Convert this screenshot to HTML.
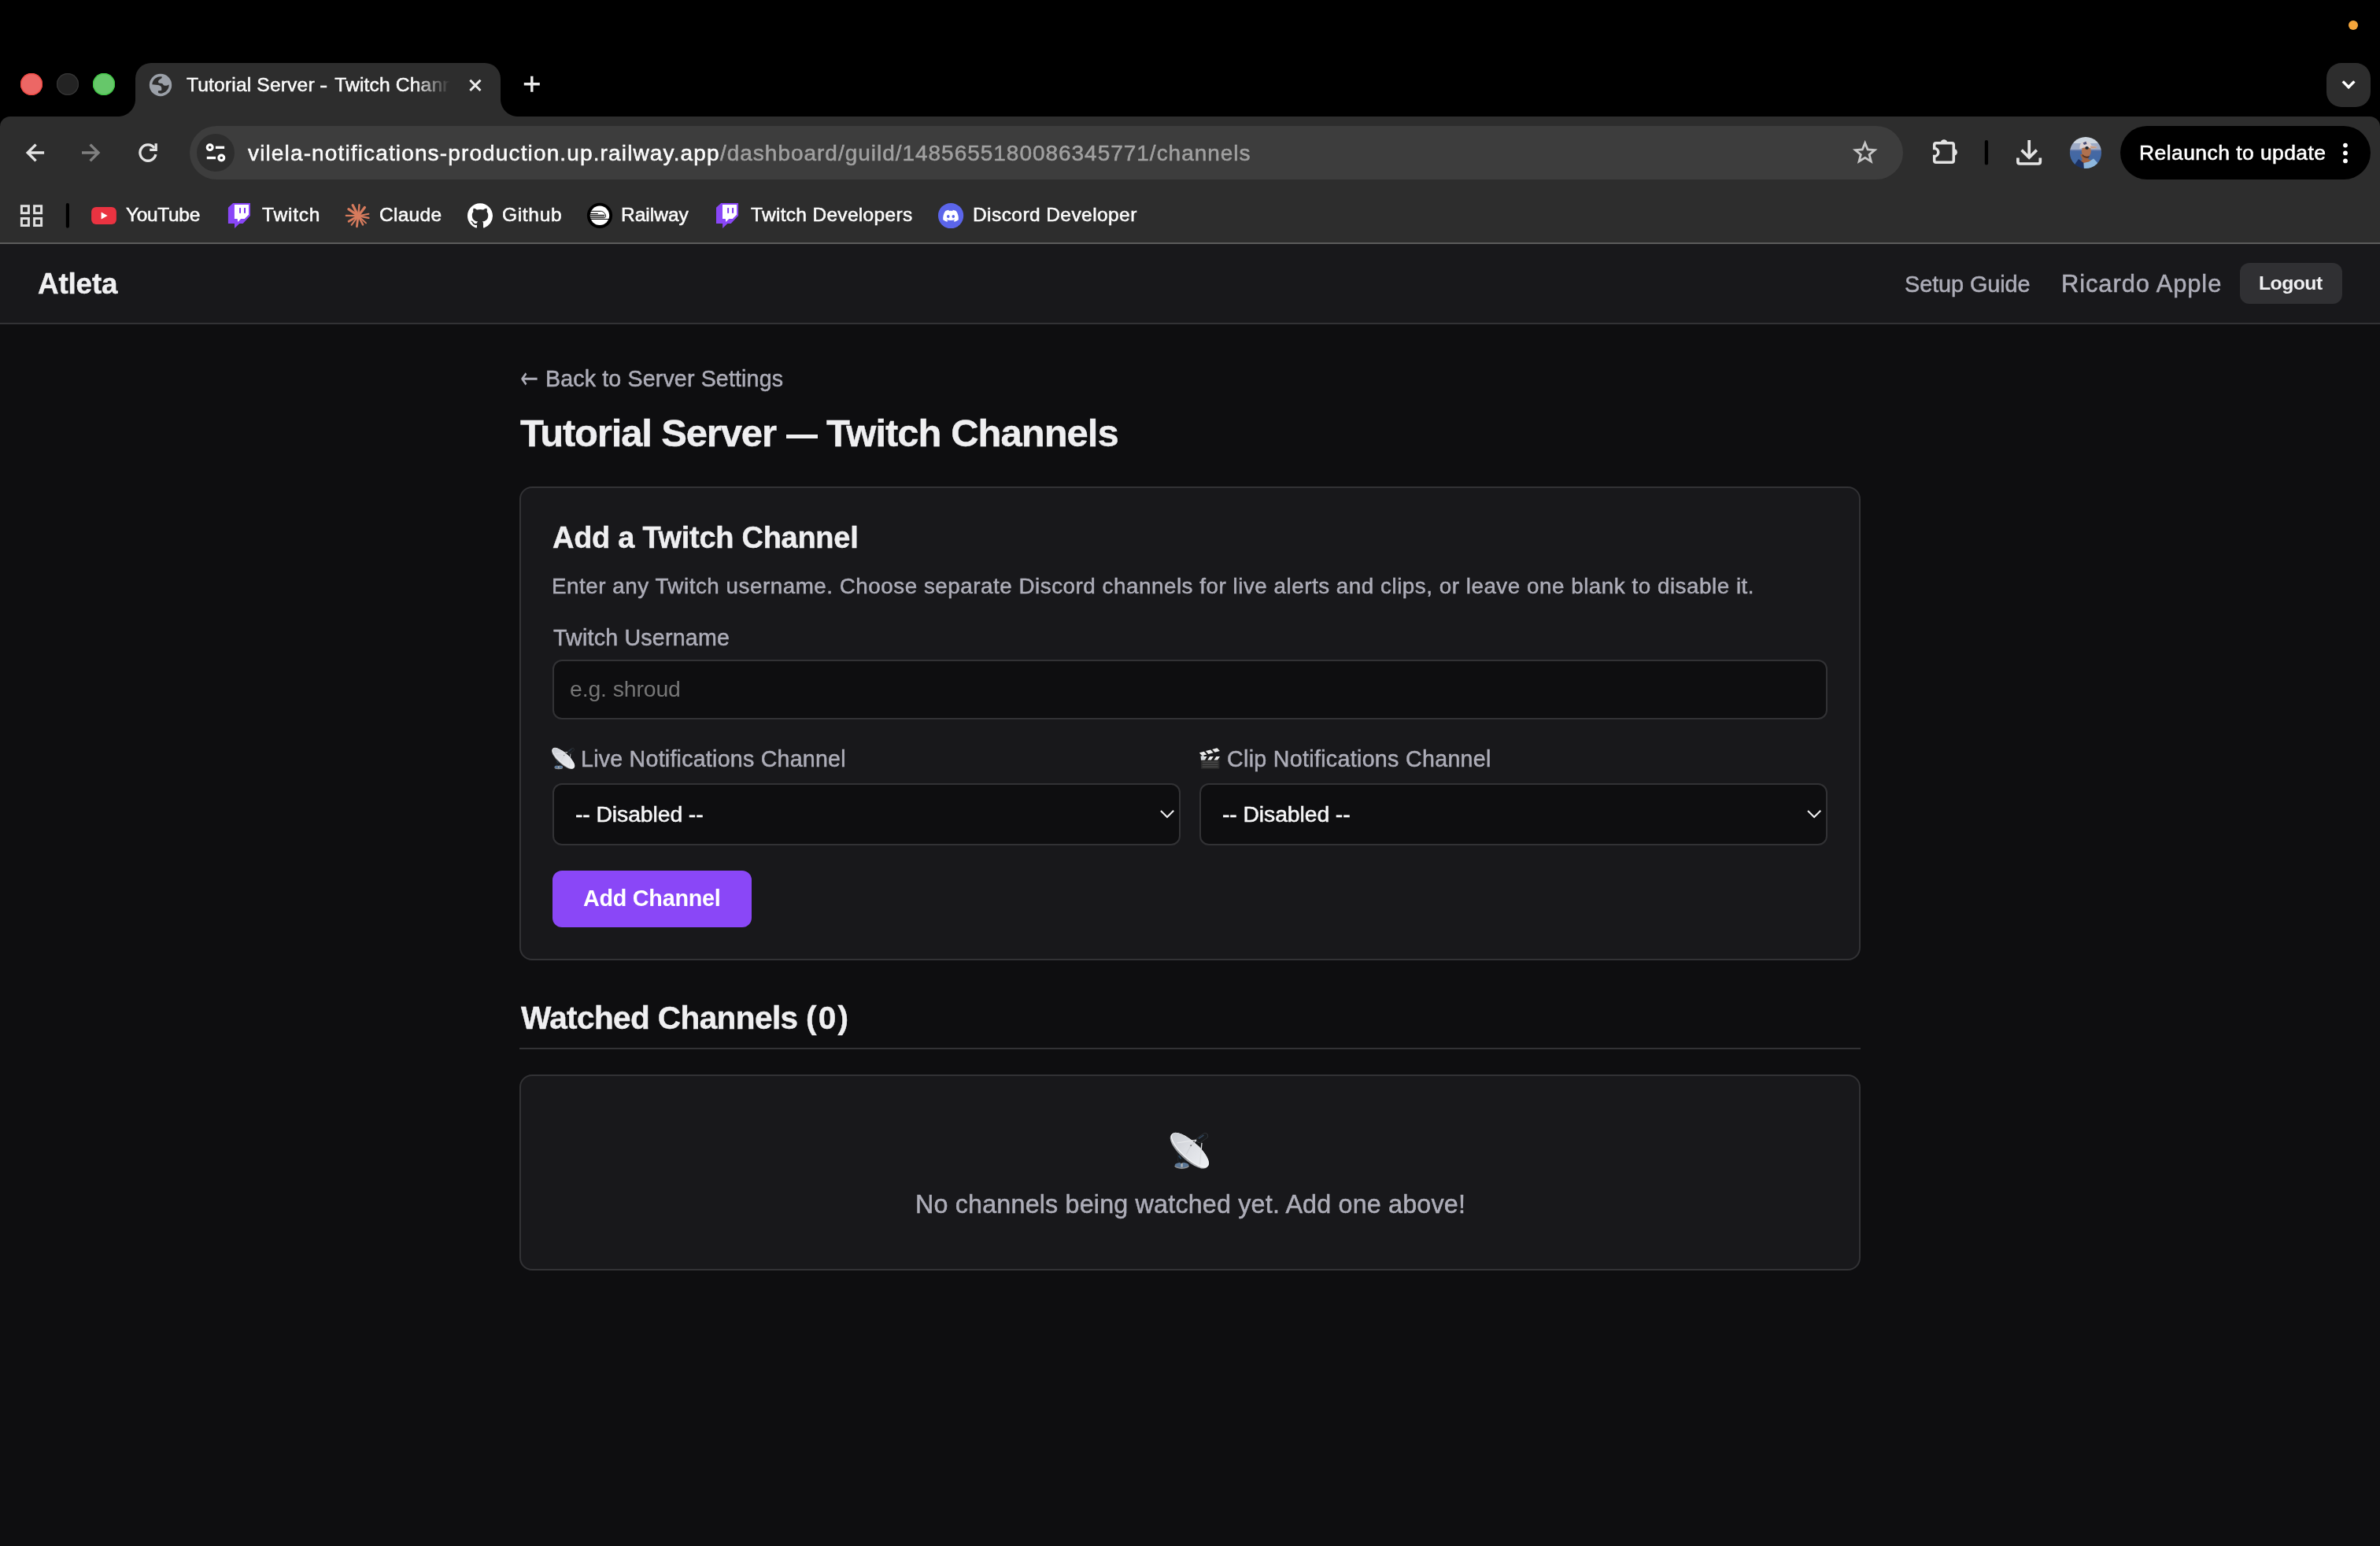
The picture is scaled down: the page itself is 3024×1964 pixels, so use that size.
<!DOCTYPE html>
<html lang="en">
<head>
<meta charset="utf-8">
<title>Tutorial Server - Twitch Channels</title>
<style>
*{box-sizing:border-box;margin:0;padding:0}
html,body{width:3024px;height:1964px;overflow:hidden;background:#0e0e10}
body{position:relative;font-family:"Liberation Sans",Arial,sans-serif;-webkit-font-smoothing:antialiased}
.a{position:absolute}
.g{margin:0;padding:0;font:inherit;display:block}
.t{position:absolute;white-space:nowrap;line-height:1;will-change:transform}
svg{position:absolute;overflow:visible}
/* browser chrome */
#frame{left:0;top:0;width:3024px;height:310px;background:#000}
#toolbar{left:0;top:148px;width:3024px;height:160px;background:#2d2d2d;border-radius:13px 13px 0 0}
#chromeline{left:0;top:308px;width:3024px;height:2px;background:#5b5b5b}
#tab{left:172px;top:80px;width:464px;height:70px;background:#2d2d2d;border-radius:20px 20px 0 0}
#tab:before,#tab:after{content:"";position:absolute;bottom:2px;width:22px;height:22px}
#tab:before{left:-22px;background:radial-gradient(circle at 0 0,rgba(45,45,45,0) 21.5px,#2d2d2d 22.5px)}
#tab:after{right:-22px;background:radial-gradient(circle at 100% 0,rgba(45,45,45,0) 21.5px,#2d2d2d 22.5px)}
.tl{width:28px;height:28px;border-radius:50%;top:93px}
#omni{left:240.5px;top:160px;width:2177.5px;height:68px;border-radius:34px;background:#3d3d3d}
#siteinfo{left:250px;top:170px;width:48px;height:48px;border-radius:50%;background:#2d2d2d}
#pill{left:2694px;top:160px;width:318px;height:68px;border-radius:34px;background:#000}
#tabsearch{left:2956px;top:80px;width:56px;height:56px;border-radius:19px;background:#2d2d2d}
#tabtitle{left:236px;top:90px;width:340px;height:36px;overflow:hidden;-webkit-mask-image:linear-gradient(90deg,#000 0,#000 290px,transparent 336px);mask-image:linear-gradient(90deg,#000 0,#000 290px,transparent 336px)}
#tabtitle span{position:absolute;left:1px;top:5.5px;font-size:24.6px;line-height:1;color:#fbfbfb;white-space:nowrap;letter-spacing:0.16px;-webkit-text-stroke:0.5px}
/* page */
#nav{left:0;top:310px;width:3024px;height:100px;background:#18181b}
#navline{left:0;top:410px;width:3024px;height:2px;background:#323235}
#logoutbtn{left:2846px;top:334px;width:130px;height:52px;border-radius:12px;background:#303033}
.card{left:660px;width:1704px;background:#18181b;border:2px solid #323235;border-radius:16px}
.field{background:#0e0e10;border:2px solid #323235;border-radius:12px}
#addbtnbg{left:702px;top:1106px;width:253px;height:72px;border-radius:12px;background:#8a47f7}
#divider{left:660px;top:1331px;width:1704px;height:2px;background:#323235}
</style>
</head>
<body>
<!-- ===== browser chrome ===== -->
<div class="a" id="frame"></div>
<div class="a" id="toolbar"></div>
<div class="a" id="tab"></div>
<div class="a" id="chromeline"></div>
<div class="a tl" style="left:26px;background:#ec6765;box-shadow:inset 0 0 0 1.2px #f2453f"></div>
<div class="a tl" style="left:72px;background:#232323;box-shadow:inset 0 0 0 1.2px #363636"></div>
<div class="a tl" style="left:118px;background:#66c76a;box-shadow:inset 0 0 0 1.2px #3cc641"></div>
<div class="a" id="tabsearch"></div>
<div class="a" style="left:2983.7px;top:26.3px;width:12px;height:12px;border-radius:50%;background:#f4a53b"></div>
<div class="a" id="tabtitle"><span>Tutorial Server <i style="font-style:normal;margin:0 3px 0 0.5px;display:inline-block;transform:scaleX(1.25)">-</i> Twitch Channels</span></div>
<div class="a" id="omni"></div>
<div class="a" id="siteinfo"></div>
<div class="a" id="pill"></div>
<svg width="3024" height="320" viewBox="0 0 3024 320" style="left:0;top:0">
<!-- globe favicon -->
<g transform="translate(184,88)">
<circle cx="20" cy="20" r="14.2" fill="#9ba0a8"/>
<path d="M9.3 19.3 A10.7 10.7 0 0 1 22 9.5 L21.4 11 C20.8 12 19.6 12.4 18.5 13.3 C17.4 14.2 16.8 15.4 17.2 16.4 C17.6 17.4 18.4 17.7 19.6 17.8 L21.6 18 C22.5 18.1 22.8 18.6 23.3 19.4 C24 20.4 24.9 20.8 26.2 20.8 C27.9 20.8 29.4 20.3 30.7 19.5 A10.7 10.7 0 0 1 17.3 30.3 L16.9 28.6 C16.8 27.7 17.1 27.4 18 27.3 L20.2 27.1 C21.1 27 21.3 26.6 21.3 25.7 L21.3 23.8 C21.2 22.4 20.6 21.5 19.5 20.9 C18.5 20.3 17.4 20.1 16.2 20 Z" fill="#2d2d2d"/>
</g>
<!-- tab close / new tab -->
<path d="M597.3 101.8 L610.5 115 M610.5 101.8 L597.3 115" stroke="#ececec" stroke-width="3" fill="none"/>
<path d="M665.8 106.8 H685.8 M675.8 96.8 V116.8" stroke="#ececec" stroke-width="3.4" fill="none"/>
<!-- tab search chevron -->
<path d="M2976.8 103.4 L2984.1 110.8 L2991.4 103.4" stroke="#fff" stroke-width="3.4" fill="none"/>
<!-- back / forward / reload -->
<path d="M56.1 194 H35 M45.6 183.6 L35.2 194 L45.6 204.4" stroke="#e3e3e3" stroke-width="3.4" fill="none"/>
<path d="M104 194 H125.2 M114.6 183.6 L125 194 L114.6 204.4" stroke="#808080" stroke-width="3.4" fill="none"/>
<path d="M196.1 188 A10.1 10.1 0 1 0 197.9 196.2" stroke="#e3e3e3" stroke-width="3.3" fill="none"/>
<path d="M198.2 182.2 V190.4 H190.2" stroke="#e3e3e3" stroke-width="3.3" fill="none"/>
<!-- site info (tune) -->
<circle cx="266.7" cy="187.3" r="3.4" stroke="#fff" stroke-width="3.2" fill="none"/>
<rect x="273.9" y="185.7" width="11.2" height="3.3" fill="#fff"/>
<rect x="262.8" y="198.9" width="11.3" height="3.3" fill="#fff"/>
<circle cx="281.3" cy="200.5" r="3.4" stroke="#fff" stroke-width="3.2" fill="none"/>
<!-- star -->
<path d="M2369.7 181.7 L2373.1 190.0 L2382.0 190.6 L2375.1 196.4 L2377.3 205.0 L2369.7 200.3 L2362.1 205.0 L2364.3 196.4 L2357.4 190.6 L2366.3 190.0 Z" stroke="#c7c7c7" stroke-width="2.8" fill="none" stroke-linejoin="miter"/>
<!-- extensions puzzle -->
<path d="M2457.7 183.9 Q2457.7 181.7 2459.9 181.7 H2480.1 Q2482.3 181.7 2482.3 183.9 V204.1 Q2482.3 206.3 2480.1 206.3 H2459.9 Q2457.7 206.3 2457.7 204.1 V198.6 A5.1 5.1 0 0 0 2457.7 188.4 Z" stroke="#e3e3e3" stroke-width="3.5" fill="none" stroke-linejoin="miter"/><path d="M2465.6 181.7 A4.4 4.6 0 0 1 2474.4 181.7 Z" fill="#e3e3e3"/><path d="M2482.3 189 A4.6 4.4 0 0 1 2482.3 197.8 Z" fill="#e3e3e3"/>
<!-- separator -->
<rect x="2521.8" y="178" width="4.3" height="31.6" rx="2.1" fill="#000"/>
<!-- download -->
<path d="M2578.2 177.9 V199.5 M2568.6 190.6 L2578.2 200.2 L2587.8 190.6" stroke="#e3e3e3" stroke-width="3.7" fill="none"/>
<path d="M2563.9 200.5 V205.5 Q2563.9 208 2566.4 208 H2589.8 Q2592.3 208 2592.3 205.5 V200.5" stroke="#e3e3e3" stroke-width="3.7" fill="none"/>
<!-- avatar -->
<defs><clipPath id="avc"><circle cx="2650" cy="194" r="20.1"/></clipPath>
<linearGradient id="sea" x1="0" y1="0" x2="0" y2="1"><stop offset="0" stop-color="#4a65a0"/><stop offset="1" stop-color="#3f6aa6"/></linearGradient></defs>
<filter id="avb" x="-10%" y="-10%" width="120%" height="120%"><feGaussianBlur stdDeviation="0.55"/></filter>
<g clip-path="url(#avc)"><g filter="url(#avb)">
<rect x="2629" y="173" width="42" height="42" fill="url(#sea)"/>
<rect x="2629" y="173" width="42" height="9.5" fill="#cdd6e0"/>
<rect x="2629" y="182" width="42" height="8.5" fill="#9facc6"/>
<path d="M2629 190 H2671 V191.5 H2629Z" fill="#6b7fae"/>
<path d="M2643 196 L2646 203 L2640 207 L2652 215 L2662 206 L2653 202 L2654 196 Z" fill="#a2633f"/>
<ellipse cx="2650.8" cy="192" rx="6" ry="7.6" fill="#b0714f"/>
<path d="M2646 196 Q2649 200 2655 198 L2654 200.5 Q2649 202 2645.5 198Z" fill="#5a3524"/>
<path d="M2642.3 189 Q2641.6 180.5 2649.5 179.4 Q2656 179.2 2657.5 185 L2664.5 186.5 Q2664 189 2657 188.2 Q2650 186 2642.3 189Z" fill="#d9d0d2"/>
<path d="M2656 185.6 L2664.6 186.6 Q2663.6 189.4 2656.4 188.2Z" fill="#c89a80"/>
<path d="M2646.5 181.5 L2650.5 179.8 L2651.5 183 L2648 184Z" fill="#4a4f78"/>
<ellipse cx="2651.6" cy="187.9" rx="2.2" ry="1.9" fill="#16202c"/>
<path d="M2634 212 L2641 202 L2647.5 207 L2648 216 Z" fill="#1f3263"/>
<path d="M2647.5 207 L2654 205.5 L2660 201.5 L2668 210 L2660 216 L2648 216Z" fill="#8db7de"/>
</g></g>
<!-- menu dots -->
<circle cx="2980" cy="184.6" r="2.9" fill="#fff"/><circle cx="2980" cy="194.4" r="2.9" fill="#fff"/><circle cx="2980" cy="204.4" r="2.9" fill="#fff"/>
<!-- apps grid -->
<g stroke="#dedede" stroke-width="3" fill="none">
<rect x="27.4" y="261.7" width="9" height="9"/><rect x="43.6" y="261.7" width="9" height="9"/>
<rect x="27.4" y="277.5" width="9" height="9"/><rect x="43.6" y="277.5" width="9" height="9"/>
</g>
<rect x="83.8" y="258" width="4.2" height="31.7" rx="2.1" fill="#000"/>
<!-- youtube -->
<rect x="116.1" y="263" width="31.8" height="21.9" rx="6" fill="#ea3341"/>
<path d="M128.6 269.4 V278.5 L136.6 274 Z" fill="#fff"/>
<!-- twitch -->
<g id="tw">
<path d="M296.1 258.1 H318 V273.9 L308.6 283.9 H304.2 L298 290.1 V283.9 H289.9 V263.7 Z" fill="#8946f7"/>
<path d="M297.9 259.9 H316 V272.8 L310.7 278.1 H306.1 L302.2 282 L301.7 278.1 H297.9 Z" fill="#fff"/>
<rect x="304.1" y="264.1" width="1.9" height="6.7" fill="#7a33f0"/><rect x="310" y="264.1" width="2" height="6.7" fill="#7a33f0"/>
</g>
<g transform="translate(620.1 0)">
<path d="M296.1 258.1 H318 V273.9 L308.6 283.9 H304.2 L298 290.1 V283.9 H289.9 V263.7 Z" fill="#8946f7"/>
<path d="M297.9 259.9 H316 V272.8 L310.7 278.1 H306.1 L302.2 282 L301.7 278.1 H297.9 Z" fill="#fff"/>
<rect x="304.1" y="264.1" width="1.9" height="6.7" fill="#7a33f0"/><rect x="310" y="264.1" width="2" height="6.7" fill="#7a33f0"/>
</g>
<!-- claude -->
<g stroke="#d67b5d" stroke-linecap="round" fill="none" transform="translate(455.2,274.2)">
<path d="M0 0 L-7.1 -13.6" stroke-width="3.27"/><path d="M0 0 L1.3 -14" stroke-width="2.41"/><path d="M0 0 L8.2 -10.6" stroke-width="3.27"/>
<path d="M0 0 L13.2 -2.4" stroke-width="2.06"/><path d="M0 0 L13.2 2.7" stroke-width="2.41"/><path d="M0 0 L9.8 9.2" stroke-width="1.98"/>
<path d="M0 0 L5.9 11.2" stroke-width="2.41"/><path d="M0 0 L-1.8 13.6" stroke-width="2.75"/><path d="M0 0 L-8.6 11.6" stroke-width="1.98"/>
<path d="M0 0 L-12.1 7.1" stroke-width="2.75"/><path d="M0 0 L-15.4 -0.3" stroke-width="2.24"/><path d="M0 0 L-12.3 -8.5" stroke-width="3.27"/>
<circle cx="0" cy="0" r="3.3" fill="#d67b5d" stroke="none"/>
</g>
<!-- github -->
<path transform="translate(593.95,258.2) scale(2.005)" fill="#fff" d="M8 0C3.58 0 0 3.58 0 8c0 3.54 2.29 6.53 5.47 7.59.4.07.55-.17.55-.38 0-.19-.01-.82-.01-1.49-2.01.37-2.53-.49-2.69-.94-.09-.23-.48-.94-.82-1.13-.28-.15-.68-.52-.01-.53.63-.01 1.08.58 1.23.82.72 1.21 1.87.87 2.33.66.07-.52.28-.87.51-1.07-1.78-.2-3.64-.89-3.64-3.95 0-.87.31-1.59.82-2.15-.08-.2-.36-1.02.08-2.12 0 0 .67-.21 2.2.82.64-.18 1.32-.27 2-.27.68 0 1.36.09 2 .27 1.53-1.04 2.2-.82 2.2-.82.44 1.1.16 1.92.08 2.12.51.56.82 1.27.82 2.15 0 3.07-1.87 3.75-3.65 3.95.29.25.54.73.54 1.48 0 1.07-.01 1.93-.01 2.2 0 .21.15.46.55.38A8.013 8.013 0 0016 8c0-4.42-3.58-8-8-8z"/>
<!-- railway -->
<circle cx="762" cy="273.8" r="16.1" fill="#000"/>
<circle cx="762" cy="273.8" r="12.2" fill="#fff"/>
<g stroke="#000" stroke-width="1" fill="none">
<path d="M750.7 268.3 H763.4 C766.5 268.3 769.6 271.7 769.6 274.5 C769.6 276.1 768.4 276.7 767.7 276.7 H750"/>
<path d="M750 271.4 H759.4" stroke-linecap="round"/>
<path d="M750 278.4 H774.2"/>
</g>
<rect x="749.8" y="272.6" width="18.6" height="2.8" fill="#555"/>
<!-- discord -->
<circle cx="1208.1" cy="274" r="16.1" fill="#5b65ea"/>
<path transform="translate(1198.2,264.5) scale(0.82)" fill="#fff" d="M20.317 4.3698a19.7913 19.7913 0 00-4.8851-1.5152.0741.0741 0 00-.0785.0371c-.211.3753-.4447.8648-.6083 1.2495-1.8447-.2762-3.68-.2762-5.4868 0-.1636-.3933-.4058-.8742-.6177-1.2495a.077.077 0 00-.0785-.037 19.7363 19.7363 0 00-4.8852 1.515.0699.0699 0 00-.0321.0277C.5334 9.0458-.319 13.5799.0992 18.0578a.0824.0824 0 00.0312.0561c2.0528 1.5076 4.0413 2.4228 5.9929 3.0294a.0777.0777 0 00.0842-.0276c.4616-.6304.8731-1.2952 1.226-1.9942a.076.076 0 00-.0416-.1057c-.6528-.2476-1.2743-.5495-1.8722-.8923a.077.077 0 01-.0076-.1277c.1258-.0943.2517-.1923.3718-.2914a.0743.0743 0 01.0776-.0105c3.9278 1.7933 8.18 1.7933 12.0614 0a.0739.0739 0 01.0785.0095c.1202.099.246.1981.3728.2924a.077.077 0 01-.0066.1276 12.2986 12.2986 0 01-1.873.8914.0766.0766 0 00-.0407.1067c.3604.698.7719 1.3628 1.225 1.9932a.076.076 0 00.0842.0286c1.961-.6067 3.9495-1.5219 6.0023-3.0294a.077.077 0 00.0313-.0552c.5004-5.177-.8382-9.6739-3.5485-13.6604a.061.061 0 00-.0312-.0286zM8.02 15.3312c-1.1825 0-2.1569-1.0857-2.1569-2.419 0-1.3332.9555-2.4189 2.157-2.4189 1.2108 0 2.1757 1.0952 2.1568 2.419 0 1.3332-.9555 2.4189-2.1569 2.4189zm7.9748 0c-1.1825 0-2.1569-1.0857-2.1569-2.419 0-1.3332.9554-2.4189 2.1569-2.4189 1.2108 0 2.1757 1.0952 2.1568 2.419 0 1.3332-.946 2.4189-2.1568 2.4189Z"/>
</svg>

<!-- ===== page ===== -->
<div class="a" id="nav"></div>
<div class="a" id="navline"></div>
<div class="a" id="logoutbtn"></div>
<div class="a card" style="top:618px;height:602px"></div>
<div class="a field" style="left:702px;top:838px;width:1620px;height:76px"></div>
<div class="a field" style="left:702px;top:995px;width:798px;height:79px"></div>
<div class="a field" style="left:1524px;top:995px;width:798px;height:79px"></div>
<div class="a" id="addbtnbg"></div>
<div class="a" id="divider"></div>
<div class="a card" style="top:1365px;height:249px"></div>
<svg width="3024" height="1964" viewBox="0 0 3024 1964" style="left:0;top:0;pointer-events:none">
<defs>
<linearGradient id="dishg" x1="0" y1="0" x2="1" y2="0"><stop offset="0" stop-color="#c9ccd2"/><stop offset="0.45" stop-color="#dcdee3"/><stop offset="1" stop-color="#eceef2"/></linearGradient>
<linearGradient id="rimg" x1="0" y1="0" x2="1" y2="0"><stop offset="0" stop-color="#b9bbbf"/><stop offset="0.5" stop-color="#8c8e92"/><stop offset="1" stop-color="#c2c4c8"/></linearGradient>
</defs>
<!-- select chevrons -->
<path d="M1474.9 1029.9 L1483 1038 L1491.2 1029.8" stroke="#efeff1" stroke-width="2.1" fill="none"/>
<path d="M2297 1029.9 L2305.1 1038 L2313.3 1029.8" stroke="#efeff1" stroke-width="2.1" fill="none"/>
<!-- emoji: satellite (label), clapper (label), satellite (empty state) -->
<svg x="701.8" y="948.6" width="28.4" height="29" viewBox="0 0 48 49" overflow="visible" style="position:static">
 <ellipse cx="13.6" cy="44.6" rx="9.1" ry="3.7" fill="#8d8e90"/>
 <ellipse cx="13.6" cy="43.4" rx="8.8" ry="3.3" fill="#5a7696"/>
 <rect x="12.5" y="36" width="2.2" height="10" fill="#b6b8ba"/>
 <path d="M7.4 27.5 L10.4 26.6 L17.6 35.6 L16.8 39.6 L12.6 41.4 L8.6 38 L9 33 Z" fill="#16191d" stroke="#33373c" stroke-width="0.5"/>
 <path d="M9.6 31.4 L12.6 35.6" stroke="#2f4a66" stroke-width="1.4"/>
 <g transform="translate(24 24.4) rotate(42)">
  <ellipse cx="0" cy="1.6" rx="30.8" ry="11.6" fill="url(#rimg)"/>
  <ellipse cx="0" cy="0" rx="30.8" ry="11.2" fill="#f4f5f7"/>
  <ellipse cx="0" cy="-0.6" rx="30" ry="10.4" fill="url(#dishg)"/>
 </g>
 <path d="M27.6 13 L32.8 11 L36.6 12.2 L38.8 15.5 L37.2 20 L32.6 17.2 Z" fill="#121416"/>
 <path d="M32.6 11.6 L7.6 15.2" stroke="#e6e7ea" stroke-width="1.3"/>
 <path d="M32.6 11.6 L25.2 18.6 L19.4 29.6" stroke="#d0d2d6" stroke-width="1.2" fill="none"/>
 <path d="M39 15.3 L36.5 42.6" stroke="#d9dbde" stroke-width="1.3"/>
 <circle cx="25.2" cy="18.6" r="1" fill="#6d6f73"/>
 <path d="M36 11.4 L43.2 6.4" stroke="#3d4146" stroke-width="7.6" stroke-linecap="round"/>
 <path d="M36 11.4 L43.2 6.4" stroke="#191b1e" stroke-width="6.4" stroke-linecap="round"/>
 <path d="M35.4 9.6 L41 5.8" stroke="#32475f" stroke-width="1.5" stroke-linecap="round"/>
</svg>
<svg x="1524" y="949.2" width="28" height="28" viewBox="0 0 28 28" overflow="visible" style="position:static">
 <rect x="2" y="16.4" width="23.4" height="11.2" rx="0.8" fill="#2b2b2b"/>
 <path d="M3.6 19 H23.6 M3.6 22 H23.6 M3.6 25 H23.6" stroke="#4f4f4f" stroke-width="1.2"/>
 <path d="M1.4 11.6 H27 L27.4 16.6 H1.6 Z" fill="#1c1c1c"/>
 <path d="M2 16.4 L5 11.8 H9.6 L6.6 16.4 Z M10.2 16.4 L13.2 11.8 H17.8 L14.8 16.4 Z M18.4 16.4 L21.4 11.8 H26 L23 16.4 Z" fill="#ececec"/>
 <g transform="rotate(-15 1.5 11.5)">
  <path d="M1 6.6 H27 V11.6 H1 Z" fill="#1c1c1c"/>
  <path d="M1.2 11.4 L3.6 6.8 H10 L7.6 11.4 Z M9.8 11.4 L12.2 6.8 H18.6 L16.2 11.4 Z M18.4 11.4 L20.8 6.8 H27 L24.6 11.4 Z" fill="#ececec" transform="matrix(-1 0 0 1 28 0)"/>
 </g>
 <path d="M1.6 11.6 L5.4 10.4 L7.6 16 L2 16.4 Z" fill="#d4d8dc"/>
</svg>
<svg x="1488" y="1436.6" width="48" height="49" viewBox="0 0 48 49" overflow="visible" style="position:static">
 <ellipse cx="13.6" cy="44.6" rx="9.1" ry="3.7" fill="#8d8e90"/>
 <ellipse cx="13.6" cy="43.4" rx="8.8" ry="3.3" fill="#5a7696"/>
 <rect x="12.5" y="36" width="2.2" height="10" fill="#b6b8ba"/>
 <path d="M7.4 27.5 L10.4 26.6 L17.6 35.6 L16.8 39.6 L12.6 41.4 L8.6 38 L9 33 Z" fill="#16191d" stroke="#33373c" stroke-width="0.5"/>
 <path d="M9.6 31.4 L12.6 35.6" stroke="#2f4a66" stroke-width="1.4"/>
 <g transform="translate(24 24.4) rotate(42)">
  <ellipse cx="0" cy="1.6" rx="30.8" ry="11.6" fill="url(#rimg)"/>
  <ellipse cx="0" cy="0" rx="30.8" ry="11.2" fill="#f4f5f7"/>
  <ellipse cx="0" cy="-0.6" rx="30" ry="10.4" fill="url(#dishg)"/>
 </g>
 <path d="M27.6 13 L32.8 11 L36.6 12.2 L38.8 15.5 L37.2 20 L32.6 17.2 Z" fill="#121416"/>
 <path d="M32.6 11.6 L7.6 15.2" stroke="#e6e7ea" stroke-width="1.3"/>
 <path d="M32.6 11.6 L25.2 18.6 L19.4 29.6" stroke="#d0d2d6" stroke-width="1.2" fill="none"/>
 <path d="M39 15.3 L36.5 42.6" stroke="#d9dbde" stroke-width="1.3"/>
 <circle cx="25.2" cy="18.6" r="1" fill="#6d6f73"/>
 <path d="M36 11.4 L43.2 6.4" stroke="#3d4146" stroke-width="7.6" stroke-linecap="round"/>
 <path d="M36 11.4 L43.2 6.4" stroke="#191b1e" stroke-width="6.4" stroke-linecap="round"/>
 <path d="M35.4 9.6 L41 5.8" stroke="#32475f" stroke-width="1.5" stroke-linecap="round"/>
</svg>
</svg>

<div class="t" id="url1" style="left:314.50px;top:180.80px;font-size:28px;font-weight:400;color:#fbfbfb;letter-spacing:1.138px;-webkit-text-stroke:0.55px;">vilela-notifications-production.up.railway.app</div>
<div class="t" id="url2" style="left:914.50px;top:180.80px;font-size:28px;font-weight:400;color:#a0a0a0;letter-spacing:0.977px;-webkit-text-stroke:0.55px;">/dashboard/guild/1485655180086345771/channels</div>
<div class="t" id="bm1" style="left:160.00px;top:261.46px;font-size:24.5px;font-weight:400;color:#fbfbfb;letter-spacing:-0.333px;-webkit-text-stroke:0.55px;">YouTube</div>
<div class="t" id="bm2" style="left:333.00px;top:261.46px;font-size:24.5px;font-weight:400;color:#fbfbfb;letter-spacing:0.800px;-webkit-text-stroke:0.55px;">Twitch</div>
<div class="t" id="bm3" style="left:482.00px;top:261.46px;font-size:24.5px;font-weight:400;color:#fbfbfb;letter-spacing:0.280px;-webkit-text-stroke:0.55px;">Claude</div>
<div class="t" id="bm4" style="left:638.00px;top:261.46px;font-size:24.5px;font-weight:400;color:#fbfbfb;letter-spacing:0.680px;-webkit-text-stroke:0.55px;">Github</div>
<div class="t" id="bm5" style="left:789.00px;top:261.46px;font-size:24.5px;font-weight:400;color:#fbfbfb;letter-spacing:0.000px;-webkit-text-stroke:0.55px;">Railway</div>
<div class="t" id="bm6" style="left:954.00px;top:261.46px;font-size:24.5px;font-weight:400;color:#fbfbfb;letter-spacing:0.312px;-webkit-text-stroke:0.55px;">Twitch Developers</div>
<div class="t" id="bm7" style="left:1235.50px;top:261.46px;font-size:24.5px;font-weight:400;color:#fbfbfb;letter-spacing:0.425px;-webkit-text-stroke:0.55px;">Discord Developer</div>
<div class="t" id="relaunch" style="left:2718.00px;top:181.17px;font-size:26.5px;font-weight:400;color:#ffffff;letter-spacing:0.424px;-webkit-text-stroke:0.55px;">Relaunch to update</div>
<div class="t" id="brand" style="left:48.00px;top:342.86px;font-size:36.9px;font-weight:700;color:#efeff1;letter-spacing:-0.200px;-webkit-text-stroke:0.4px;">Atleta</div>
<div class="t" id="setup" style="left:2420.00px;top:346.84px;font-size:28.9px;font-weight:400;color:#adadb8;letter-spacing:-0.100px;-webkit-text-stroke:0.5px;">Setup Guide</div>
<div class="t" id="user" style="left:2619.00px;top:345.64px;font-size:30.9px;font-weight:400;color:#adadb8;letter-spacing:0.917px;-webkit-text-stroke:0.5px;">Ricardo Apple</div>
<div class="t" id="logout" style="left:2870.00px;top:348.31px;font-size:24.8px;font-weight:700;color:#efeff1;letter-spacing:-0.560px;">Logout</div>
<div class="t" id="backarrow" style="left:661.00px;top:466.94px;font-size:27.6px;font-weight:400;color:#adadb8;letter-spacing:0.000px;font-family:'DejaVu Sans',sans-serif;transform:scaleY(1.38);">←</div>
<div class="t" id="back" style="left:693.00px;top:466.79px;font-size:28.6px;font-weight:400;color:#adadb8;letter-spacing:0.145px;-webkit-text-stroke:0.5px;">Back to Server Settings</div>
<h1 class="g">
<span class="t" id="h1a" style="left:661.00px;top:526.42px;font-size:49px;font-weight:700;color:#efeff1;letter-spacing:-1.157px;-webkit-text-stroke:0.4px;">Tutorial Server</span>
<span class="t" id="h1b" style="left:998.50px;top:525.67px;font-size:50px;font-weight:700;color:#efeff1;letter-spacing:0.000px;transform:scaleX(0.8);transform-origin:0 50%;">—</span>
<span class="t" id="h1c" style="left:1050.00px;top:526.42px;font-size:49px;font-weight:700;color:#efeff1;letter-spacing:-1.000px;-webkit-text-stroke:0.4px;">Twitch Channels</span>
</h1>
<div class="t" id="h2" style="left:702.00px;top:663.63px;font-size:38px;font-weight:700;color:#efeff1;letter-spacing:-0.284px;-webkit-text-stroke:0.4px;">Add a Twitch Channel</div>
<div class="t" id="desc" style="left:701.00px;top:731.07px;font-size:27.8px;font-weight:400;color:#adadb8;letter-spacing:0.519px;-webkit-text-stroke:0.5px;">Enter any Twitch username. Choose separate Discord channels for live alerts and clips, or leave one blank to disable it.</div>
<div class="t" id="lbl1" style="left:703.00px;top:795.89px;font-size:28.6px;font-weight:400;color:#adadb8;letter-spacing:0.214px;-webkit-text-stroke:0.5px;">Twitch Username</div>
<div class="t" id="ph" style="left:724.00px;top:860.96px;font-size:28.4px;font-weight:400;color:#767676;letter-spacing:-0.120px;">e.g. shroud</div>
<div class="t" id="lbl2" style="left:737.50px;top:949.99px;font-size:28.6px;font-weight:400;color:#adadb8;letter-spacing:0.240px;-webkit-text-stroke:0.5px;">Live Notifications Channel</div>
<div class="t" id="lbl3" style="left:1559.00px;top:949.99px;font-size:28.6px;font-weight:400;color:#adadb8;letter-spacing:0.320px;-webkit-text-stroke:0.5px;">Clip Notifications Channel</div>
<div class="t" id="sel1" style="left:731.00px;top:1020.46px;font-size:28.4px;font-weight:400;color:#f7f7f8;letter-spacing:-0.108px;-webkit-text-stroke:0.5px;">-- Disabled --</div>
<div class="t" id="sel2" style="left:1553.00px;top:1020.46px;font-size:28.4px;font-weight:400;color:#f7f7f8;letter-spacing:-0.108px;-webkit-text-stroke:0.5px;">-- Disabled --</div>
<div class="t" id="addbtn" style="left:741.00px;top:1126.62px;font-size:28.8px;font-weight:700;color:#ffffff;letter-spacing:-0.280px;">Add Channel</div>
<h2 class="g">
<span class="t" id="h3a" style="left:661.50px;top:1272.63px;font-size:40.6px;font-weight:700;color:#efeff1;letter-spacing:-0.627px;-webkit-text-stroke:0.4px;">Watched Channels</span>
<span class="t" id="h3b" style="left:1023.50px;top:1272.63px;font-size:40.6px;font-weight:700;color:#efeff1;letter-spacing:2.200px;-webkit-text-stroke:0.4px;">(0)</span>
</h2>
<div class="t" id="empty" style="left:1162.50px;top:1513.56px;font-size:32.3px;font-weight:400;color:#adadb8;letter-spacing:0.173px;-webkit-text-stroke:0.5px;">No channels being watched yet. Add one above!</div>
<script>(function(){var d=window.devicePixelRatio||1,w=window.innerWidth;if(d!==1&&w&&Math.abs(w*d-3024)<4){document.documentElement.style.zoom=(1/d);}})();</script>
</body>
</html>
